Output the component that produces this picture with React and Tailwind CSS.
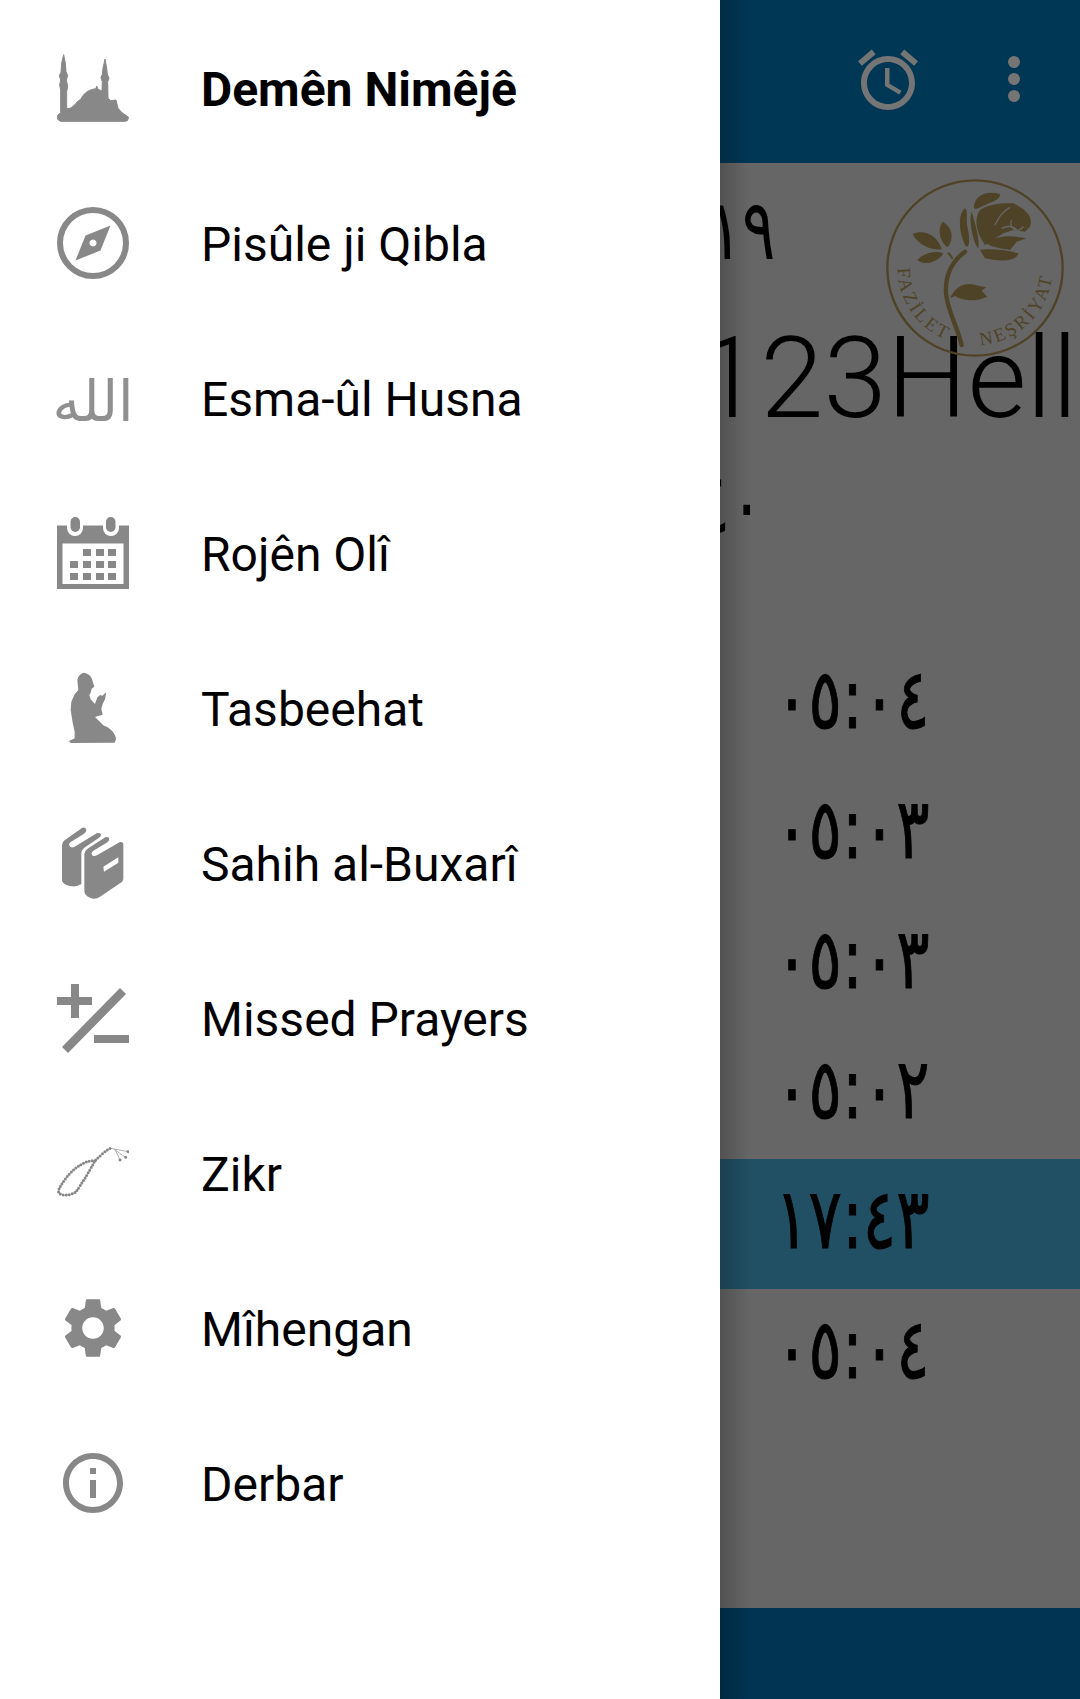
import React from "react";

const ROBOTO = "font-['Roboto',sans-serif]";
const ARABIC = "font-['DejaVu_Sans',sans-serif]";

// Iconos dibujados a mano, en coordenadas de 72x72 salvo indicación
const Mosque = () => (
  <svg viewBox="51 36 216 216" className="w-[72px] h-[72px]">
    <path
      fill="#888888"
      stroke="#888888"
      strokeWidth="3"
      strokeLinejoin="round"
      d="M71 44 L76 70 L78 95 L83 107 L79 120 L83 140 L80 155 L80 205 C90 208 100 200 112 185 L122 178 C132 158 148 148 168 146 L170 138 L174 148 L186 153 L187 125 L183 113 L187 103 L189 85 L195 57 L200 85 L202 103 L207 115 L203 125 L204 175 L212 182 L228 180 L234 205 L246 218 L266 232 L262 242 L256 244 L62 244 L53 238 L53 226 L62 218 L62 150 L59 135 L62 120 L58 107 L63 97 L65 70 Z"
    />
  </svg>
);

const Compass = () => (
  <svg viewBox="0 0 72 72" className="w-[72px] h-[72px]">
    <circle cx="36" cy="36" r="33" fill="none" stroke="#888888" strokeWidth="6" />
    <path
      fill="#888888"
      fillRule="evenodd"
      d="M53.5 18.5 L43.5 43.5 L18.5 53.5 L28.5 28.5 Z M36 32.5 a3.5 3.5 0 1 0 0.01 0 Z"
    />
  </svg>
);

const Calendar = () => (
  <svg viewBox="0 0 72 72" className="w-[72px] h-[72px]">
    <rect x="0" y="8.5" width="72" height="63.5" fill="#888888" />
    <rect x="5.5" y="26.5" width="61" height="40.5" fill="#ffffff" />
    <rect x="10" y="0" width="16" height="19" rx="8" fill="#ffffff" />
    <rect x="46" y="0" width="16" height="19" rx="8" fill="#ffffff" />
    <rect x="13.5" y="0" width="9.5" height="15" rx="4.7" fill="#888888" />
    <rect x="49" y="0" width="9.5" height="15" rx="4.7" fill="#888888" />
    {[
      [26, 32], [39, 32], [51, 32],
      [13, 44], [26, 44], [39, 44], [51, 44],
      [13, 56], [26, 56], [39, 56], [51, 56],
    ].map(([x, y]) => (
      <rect key={`${x}-${y}`} x={x} y={y} width="8" height="7" fill="#888888" />
    ))}
  </svg>
);

const Praying = () => (
  <svg viewBox="51 36 216 216" className="w-[72px] h-[72px]">
    <path
      fill="#888888"
      d="M130 38 C146 40 156 50 158 64 L163 80 L155 86 L152 98 L148 106 L152 118 L165 132 L172 112 L182 104 L186 108 L199 97 L195 118 L188 132 L184 146 L188 164 L165 171 L190 196 C212 204 228 222 228 238 L224 248 L92 249 L87 243 L104 235 L104 215 L98 188 L92 150 L94 125 L104 103 L115 90 L112 60 C114 48 120 42 130 38 Z"
    />
  </svg>
);

const Books = () => (
  <svg viewBox="51 21 216 216" className="w-[72px] h-[72px]">
    <path
      fill="#888888"
      d="M66 78 Q66 65 78 58 L126 24 Q136 20 139 30 Q139 37 131 42 L92 66 Q82 74 92 81 Q96 84 104 80 L170 40 Q181 36 183 44 Q183 50 176 54 L135 82 Q124 90 124 100 L124 192 Q110 202 90 198 Q66 192 66 180 Z"
    />
    <path
      fill="#888888"
      d="M133 105 Q133 92 146 84 L196 52 Q206 48 208 57 Q208 63 200 68 L160 92 Q150 100 158 107 Q164 110 172 105 L240 66 Q250 64 250 74 L250 175 Q250 185 240 190 L180 230 Q165 240 150 233 Q133 226 133 212 Z"
    />
    <path fill="#ffffff" d="M190 140 L235 112 L235 128 L192 155 Z" />
  </svg>
);

const PlusMinus = () => (
  <svg viewBox="0 0 72 72" className="w-[72px] h-[72px]" fill="#888888">
    <rect x="0" y="15" width="35" height="8" />
    <rect x="14" y="2" width="8" height="34" />
    <rect x="37" y="53" width="35" height="8" />
    <path d="M63 6 L69 12 L11 71 L5 65 Z" />
  </svg>
);

const Tasbih = () => (
  <svg viewBox="51 21 216 216" className="w-[72px] h-[72px]" fill="none" stroke="#888888">
    <path
      strokeWidth="9"
      strokeLinecap="round"
      strokeDasharray="0 9"
      d="M165 92 C140 90 110 108 85 135 C70 155 52 178 56 188 C62 198 90 198 108 186 C122 165 145 130 165 92 C178 80 198 60 212 55"
    />
    <path strokeWidth="2" d="M212 55 L264 65 M222 58 L257 82 M226 60 L240 90" />
    <circle cx="264" cy="65" r="4" fill="#888888" />
    <circle cx="257" cy="82" r="4" fill="#888888" />
    <circle cx="240" cy="90" r="4" fill="#888888" />
  </svg>
);

const Gear = () => (
  <svg viewBox="0 0 24 24" className="w-[72px] h-[72px]">
    <path
      fill="#888888"
      fillRule="evenodd"
      d="M19.14 12.94c.04-.3.06-.61.06-.94 0-.32-.02-.64-.07-.94l2.03-1.58c.18-.14.23-.41.12-.61l-1.92-3.32c-.12-.22-.37-.29-.59-.22l-2.39.96c-.5-.38-1.03-.7-1.62-.94l-.36-2.54c-.04-.24-.24-.41-.48-.41h-3.84c-.24 0-.43.17-.47.41l-.36 2.54c-.59.24-1.13.57-1.62.94l-2.39-.96c-.22-.08-.47 0-.59.22L2.74 8.87c-.12.21-.08.47.12.61l2.03 1.58c-.05.3-.09.63-.09.94s.02.64.07.94l-2.03 1.58c-.18.14-.23.41-.12.61l1.92 3.32c.12.22.37.29.59.22l2.39-.96c.5.38 1.03.7 1.62.94l.36 2.54c.05.24.24.41.48.41h3.84c.24 0 .44-.17.47-.41l.36-2.54c.59-.24 1.13-.56 1.62-.94l2.39.96c.22.08.47 0 .59-.22l1.92-3.32c.12-.22.07-.47-.12-.61l-2.01-1.58zM12 15.6c-1.98 0-3.6-1.62-3.6-3.6s1.62-3.6 3.6-3.6 3.6 1.62 3.6 3.6-1.62 3.6-3.6 3.6z"
    />
  </svg>
);

const Info = () => (
  <svg viewBox="0 0 24 24" className="w-[72px] h-[72px]">
    <path
      fill="#888888"
      d="M11 17h2v-6h-2v6zm1-15C6.48 2 2 6.48 2 12s4.48 10 10 10 10-4.48 10-10S17.52 2 12 2zm0 18c-4.41 0-8-3.59-8-8s3.59-8 8-8 8 3.59 8 8-3.59 8-8 8zM11 9h2V7h-2v2z"
    />
  </svg>
);

// El icono de Esma-ûl Husna es texto real, no un trazado
const Allah = () => (
  <span dir="rtl" className={`${ARABIC} mt-[8px] text-[56px] leading-none text-[#909090]`}>
    الله
  </span>
);

const Logo = () => (
  <svg viewBox="0 0 600 600" className="absolute left-[870px] top-[170px] w-[200px] h-[200px]">
    <defs>
      <path id="logoArc" d="M83 294 A232 232 0 0 0 547 294" />
    </defs>
    <circle cx="315" cy="294" r="263" fill="none" stroke="#4f4327" strokeWidth="7" />
    <g fill="#4f4327">
      <path d="M128 192 C165 175 205 200 215 238 C180 240 145 225 128 192 Z" />
      <path d="M218 155 C245 170 255 205 232 232 C210 215 200 180 218 155 Z" />
      <path d="M142 270 C160 250 195 240 220 250 C205 275 165 290 142 270 Z" />
      <path d="M240 385 C255 350 285 335 315 345 L348 352 L335 362 L352 380 C320 395 285 395 255 378 Z" />
      <path d="M312 115 C310 80 345 60 390 72 C392 90 365 95 345 105 C330 112 320 120 312 115 Z" />
      <path d="M285 115 C265 130 265 180 285 225 C300 245 300 200 292 170 C288 145 295 125 285 115 Z" />
      <path d="M305 125 C295 150 310 220 325 235 C330 210 315 160 305 125 Z" />
      <path d="M330 120 C360 100 400 100 430 100 C470 120 490 140 480 170 L465 185 L430 180 L400 190 L345 225 C320 190 310 150 330 120 Z" />
      <path d="M330 240 C360 235 410 240 445 250 C440 275 385 275 345 265 Z" />
      <path d="M350 220 C380 195 420 195 470 205 L440 215 L420 240 C395 235 370 235 350 220 Z" />
      <path d="M232 250 L238 247 L250 265 L246 268 Z" />
    </g>
    <g fill="none" stroke="#4f4327" strokeLinecap="round">
      <path strokeWidth="13" d="M285 245 C245 275 225 320 228 370 C232 420 262 470 275 525" />
    </g>
    <g fill="none" stroke="#666666" strokeWidth="4">
      <path d="M375 165 C385 145 395 125 420 112" />
      <path d="M425 150 a20 20 0 1 0 35 20" />
      <path d="M395 175 C415 165 430 170 440 180" />
    </g>
    <text fill="#4f4327" fontSize="56" fontFamily="'Liberation Serif', serif">
      <textPath href="#logoArc" startOffset="0" textLength="271">FAZİLET</textPath>
    </text>
    <text fill="#4f4327" fontSize="56" fontFamily="'Liberation Serif', serif">
      <textPath href="#logoArc" startOffset="380" textLength="320">NEŞRİYAT</textPath>
    </text>
  </svg>
);

const menu = [
  { label: "Demên Nimêjê", icon: <Mosque />, activo: true },
  { label: "Pisûle ji Qibla", icon: <Compass /> },
  { label: "Esma-ûl Husna", icon: <Allah /> },
  { label: "Rojên Olî", icon: <Calendar /> },
  { label: "Tasbeehat", icon: <Praying /> },
  { label: "Sahih al-Buxarî", icon: <Books /> },
  { label: "Missed Prayers", icon: <PlusMinus /> },
  { label: "Zikr", icon: <Tasbih /> },
  { label: "Mîhengan", icon: <Gear /> },
  { label: "Derbar", icon: <Info /> },
];

const horas = [
  { hora: "٠٥:٠٤" },
  { hora: "٠٥:٠٣" },
  { hora: "٠٥:٠٣" },
  { hora: "٠٥:٠٢" },
  { hora: "١٧:٤٣", actual: true },
  { hora: "٠٥:٠٤" },
];

export default function App() {
  return (
    <div className="relative w-[1080px] h-[1699px] overflow-hidden bg-[#666666] text-black flex flex-col">

      {/* Barra superior */}
      <header className="h-[163px] shrink-0 bg-[#003755] flex justify-end items-start pt-[44px] pr-[60px] gap-[84px]">
        <svg viewBox="0 0 24 24" className="w-[72px] h-[72px]">
          <path
            fill="#757575"
            d="M22 5.72l-4.6-3.86-1.29 1.53 4.6 3.86L22 5.72zM7.88 3.39L6.6 1.86 2 5.71l1.29 1.53 4.59-3.85zM12.5 8H11v6l4.75 2.85.75-1.23-4-2.37V8zM12 4c-4.97 0-9 4.03-9 9s4.03 9 9 9 9-4.03 9-9-4.03-9-9-9zm0 16c-3.87 0-7-3.13-7-7s3.13-7 7-7 7 3.13 7 7-3.13 7-7 7z"
          />
        </svg>
        <div className="flex flex-col gap-[5px] pt-[12px] w-[12px]">
          <span className="w-[12px] h-[12px] rounded-full bg-[#757575]" />
          <span className="w-[12px] h-[12px] rounded-full bg-[#757575]" />
          <span className="w-[12px] h-[12px] rounded-full bg-[#757575]" />
        </div>
      </header>

      {/* Contenido tapado en parte por el menú */}
      <main className="flex-1 flex flex-col">
        <div className={`${ARABIC} h-[155px] pt-[25px] w-[775px] text-right text-[84px] leading-none`}>
          <span className="inline-block origin-right scale-x-[0.74]">٢٠١٩</span>
        </div>
        <div className={`${ROBOTO} h-[120px] pl-[697px] text-[114px] font-light leading-[120px] whitespace-nowrap`}>
          123Hello
        </div>
        <div className={`${ARABIC} h-[140px] pt-[24px] w-[763px] text-right text-[84px] leading-none`}>
          <span className="inline-block origin-right scale-x-[0.74]">١٤٤٠</span>
        </div>
        <div className="h-[61px]" />
        {horas.map((fila, i) => (
          <div
            key={i}
            className={`h-[130px] flex items-center justify-center pl-[624px] pb-[10px] ${ARABIC} text-[84px] leading-none ${fila.actual ? "bg-[#214f64]" : ""}`}
          >
            <span className="inline-block scale-x-[0.74] [-webkit-text-stroke:1px_black]">{fila.hora}</span>
          </div>
        ))}
      </main>

      {/* Barra inferior */}
      <footer className="h-[91px] shrink-0 bg-[#003452]" />

      <Logo />

      {/* Sombra del menú */}
      <div className="absolute left-[720px] top-0 bottom-0 w-[30px] bg-gradient-to-r from-black/20 to-transparent" />

      {/* Menú lateral */}
      <nav className={`absolute left-0 top-0 bottom-0 w-[720px] bg-white pt-[12px] ${ROBOTO}`}>
        {menu.map((item) => (
          <div key={item.label} className="h-[155px] flex items-center pl-[57px]">
            <div className="w-[72px] h-[72px] -mt-[4px] shrink-0 flex items-center justify-center">
              {item.icon}
            </div>
            <span className={`ml-[72px] text-[48px] leading-none text-black ${item.activo ? "font-bold" : "font-normal"}`}>
              {item.label}
            </span>
          </div>
        ))}
      </nav>
    </div>
  );
}
